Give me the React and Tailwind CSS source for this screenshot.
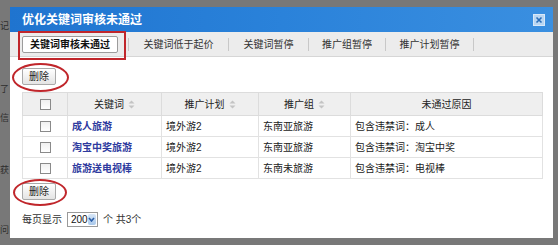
const font = { fontFamily: '"Liberation Sans", "Noto Sans CJK SC", sans-serif' }

const rows = [
  { kw: '成人旅游', plan: '境外游2', group: '东南亚旅游', reason: '包含违禁词：成人' },
  { kw: '淘宝中奖旅游', plan: '境外游2', group: '东南亚旅游', reason: '包含违禁词：淘宝中奖' },
  { kw: '旅游送电视棒', plan: '境外游2', group: '东南未旅游', reason: '包含违禁词：电视棒' },
]

function SortIcon() {
  return (
    <svg width="7" height="9" viewBox="0 0 7 9" className="ml-[4px] inline-block">
      <path d="M3.5 0.5 L6.5 3.5 L0.5 3.5 Z" fill="#c4c4c4" />
      <path d="M3.5 8.5 L6.5 5.5 L0.5 5.5 Z" fill="#c4c4c4" />
    </svg>
  )
}

function Checkbox() {
  return <span className="inline-block h-[11px] w-[11px] border border-[#8a8a8a] bg-gradient-to-b from-[#f0f0f0] to-white" />
}

function DeleteButton() {
  return (
    <button
      type="button"
      className="h-[17px] w-[34px] rounded-[2px] border border-[#a9a9a9] bg-gradient-to-b from-white to-[#e4e4e4] text-[10px] leading-[15px] text-[#222]"
    >
      删除
    </button>
  )
}

function Ellipse({ className }) {
  return <div className={`pointer-events-none absolute rounded-[50%] border-2 border-[#c0262b] ${className}`} />
}

export default function App() {
  const tabs = ['关键词低于起价', '关键词暂停', '推广组暂停', '推广计划暂停']
  const tabWidths = ['w-[99px]', 'w-[79px]', 'w-[76px]', 'w-[87px]']
  const bgChars = [
    ['记', 'top-[22px]'],
    ['了', 'top-[85px]'],
    ['信', 'top-[114px]'],
    ['获', 'top-[166px]'],
    ['问', 'top-[226px]'],
  ]

  return (
    <div className="relative h-[245px] w-[558px] overflow-hidden bg-[#787878] pb-[7px] pl-[10px] pr-[5px] pt-[7px]" style={font}>
      {bgChars.map(([c, top]) => (
        <span key={c} className={`absolute left-0 text-[9px] leading-none text-[#2e2e2e] ${top}`}>
          {c}
        </span>
      ))}
      <div className="relative flex h-full flex-col bg-white">
        <div className="flex h-[25px] items-center justify-between bg-gradient-to-r from-[#1f74cf] via-[#2a82da] to-[#3a8fe0] pl-[12px] pr-[8px]">
          <span className="text-[12px] font-bold text-white">优化关键词审核未通过</span>
          <span className="flex h-[12px] w-[12px] items-center justify-center border border-[#d8e8f8] bg-[#b9d6f2]">
            <svg width="8" height="8" viewBox="0 0 8 8">
              <path d="M1.5 1.5 L6.5 6.5 M6.5 1.5 L1.5 6.5" stroke="#2a6db8" strokeWidth="1.6" />
            </svg>
          </span>
        </div>
        <div className="flex h-[25px] items-center border-b border-[#d6d6d6] bg-[#ececec] pl-[12px]">
          <div className="flex h-[17px] w-[96px] items-center justify-center rounded-[2px] border border-[#9c9c9c] bg-white text-[10px] font-bold text-[#111]">
            关键词审核未通过
          </div>
          <span className="ml-[10px] h-[13px] w-px bg-[#c8c8c8]" />
          {tabs.map((t, i) => (
            <div key={t} className="flex items-center">
              <span className={`${tabWidths[i]} text-center text-[10px] text-[#333]`}>{t}</span>
              <span className="h-[13px] w-px bg-[#c8c8c8]" />
            </div>
          ))}
        </div>
        <div className="absolute left-[8px] top-[24px] h-[29px] w-[108px] border-2 border-[#c0262b]" />

        <div className="flex flex-col pl-[12px] pt-[11px]">
          <div className="relative flex">
            <DeleteButton />
            <Ellipse className="left-[-10px] top-[-5px] h-[29px] w-[57px]" />
          </div>
          <table className="mt-[7px] w-[521px] border-collapse text-[10px] text-[#222]">
            <thead>
              <tr className="h-[23px] bg-[#efefef]">
                <th className="w-[45px] border border-[#dcdcdc] font-normal">
                  <div className="flex justify-center">
                    <Checkbox />
                  </div>
                </th>
                <th className="w-[94px] border border-[#dcdcdc] font-normal">
                  关键词<SortIcon />
                </th>
                <th className="w-[97px] border border-[#dcdcdc] font-normal">
                  推广计划<SortIcon />
                </th>
                <th className="w-[92px] border border-[#dcdcdc] font-normal">
                  推广组<SortIcon />
                </th>
                <th className="border border-[#dcdcdc] font-normal">未通过原因</th>
              </tr>
            </thead>
            <tbody>
              {rows.map((r) => (
                <tr key={r.kw} className="h-[21px]">
                  <td className="border border-[#e2e2e2]">
                    <div className="flex justify-center">
                      <Checkbox />
                    </div>
                  </td>
                  <td className="border border-[#e2e2e2] pl-[4px] font-bold text-[#2e3a9e]">{r.kw}</td>
                  <td className="border border-[#e2e2e2] pl-[4px]">{r.plan}</td>
                  <td className="border border-[#e2e2e2] pl-[4px]">{r.group}</td>
                  <td className="border border-[#e2e2e2] pl-[4px]">{r.reason}</td>
                </tr>
              ))}
            </tbody>
          </table>
          <div className="relative mt-[4px] flex">
            <DeleteButton />
            <Ellipse className="left-[-9px] top-[-4px] h-[27px] w-[54px]" />
          </div>
          <div className="mt-[12px] flex items-center text-[10px] text-[#333]">
            <span>每页显示</span>
            <span className="ml-[5px] flex h-[15px] w-[31px] items-center justify-between border border-[#9a9a9a] bg-white pl-[3px] pr-[1px] text-[10px] text-[#111]">
              200
              <span className="flex h-[11px] w-[10px] items-center justify-center rounded-[2px] bg-gradient-to-b from-[#d7e6f7] to-[#a9c8ea]">
                <svg width="7" height="5" viewBox="0 0 7 5">
                  <path d="M1 1 L3.5 4 L6 1" stroke="#2c5fa8" strokeWidth="1.6" fill="none" />
                </svg>
              </span>
            </span>
            <span className="ml-[5px]">个 共3个</span>
          </div>
        </div>
      </div>
    </div>
  )
}
